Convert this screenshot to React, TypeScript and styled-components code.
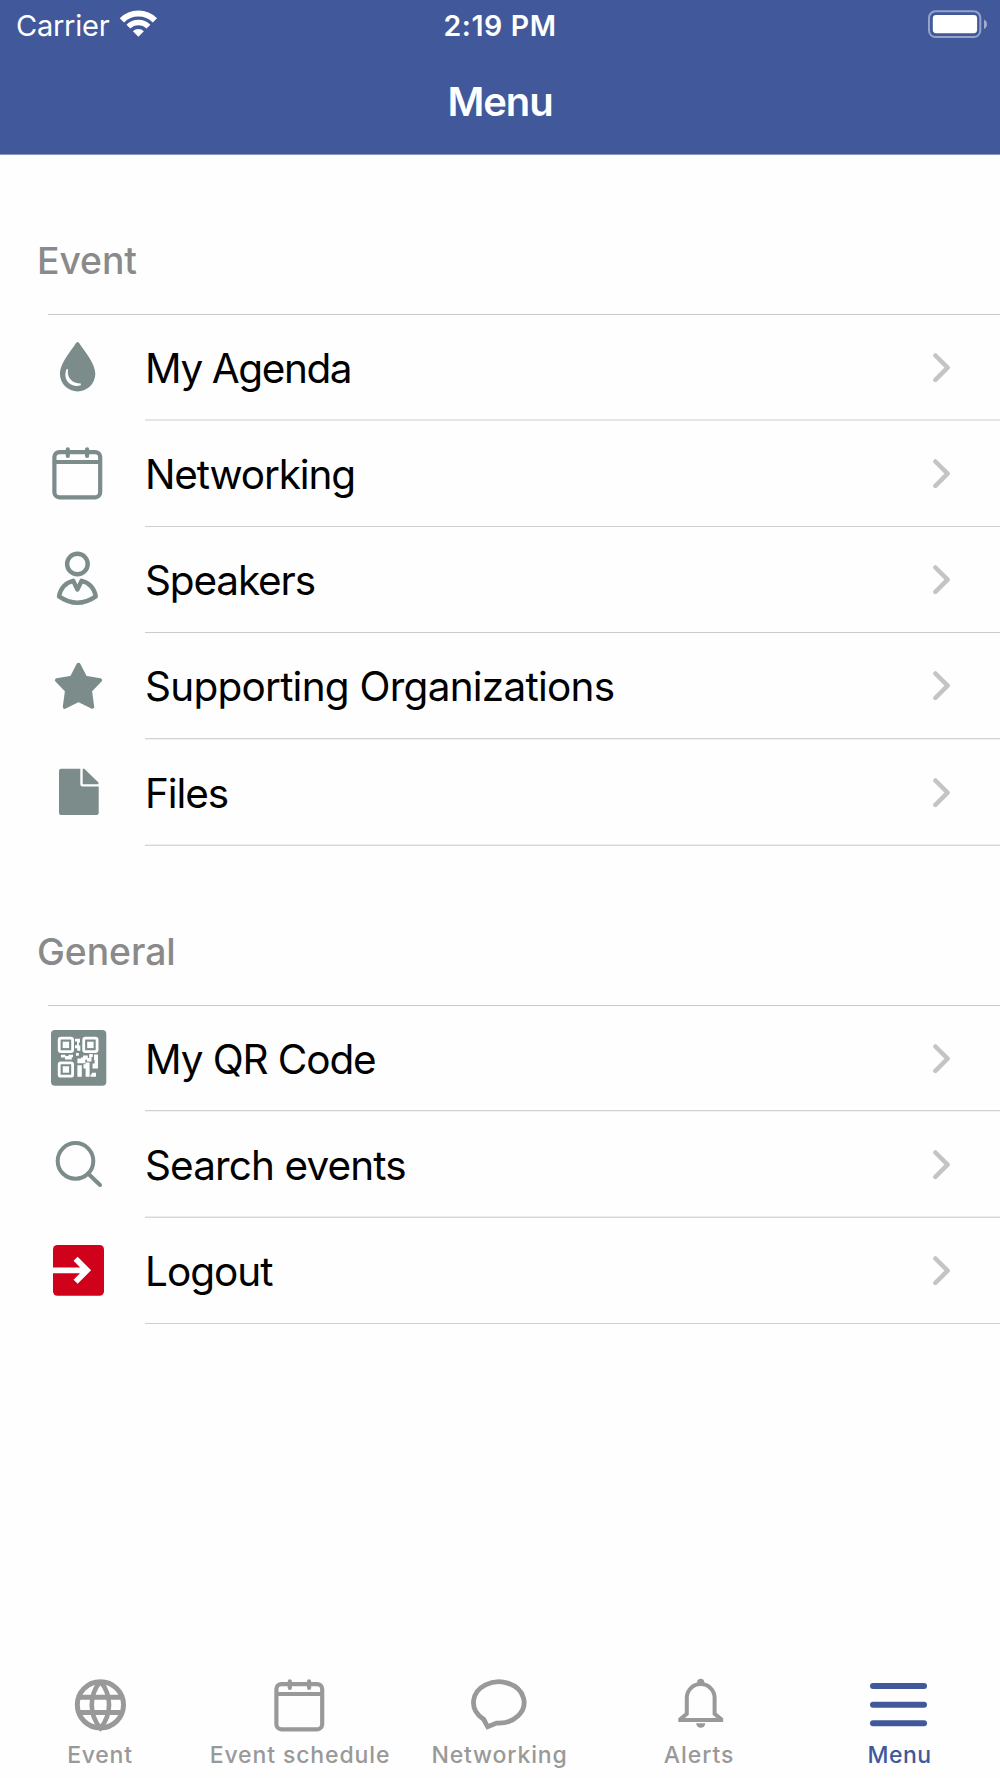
import React from "react";
import styled, { createGlobalStyle } from "styled-components";

const BLUE = "#41589b";
const SLATE = "#7b8c8b";
const TAB_GREY = "#999999";

const GlobalStyle = createGlobalStyle`
  * { box-sizing: border-box; }
  body { margin: 0; background: #fff; }
`;

const Screen = styled.div`
  display: flex;
  flex-direction: column;
  width: 1000px;
  height: 1778px;
  background: #fefefe;
  color: #000;
  font-family: Inter, "Liberation Sans", sans-serif;
  overflow: hidden;
  white-space: nowrap;
`;

const Header = styled.header`
  height: 155px;
  flex: none;
  background: ${BLUE};
  border-bottom: 1px solid #8a96bd;
  color: #fff;
`;

const StatusBar = styled.div`
  display: grid;
  grid-template-columns: 1fr auto 1fr;
  height: 50px;
  padding: 0 12px;
  line-height: 51px;
`;

const Carrier = styled.div`
  display: grid;
  grid-template-columns: 103px 40px;
  padding-left: 4px;
  font-size: 29px;
  letter-spacing: -0.25px;
`;

const Clock = styled.div`
  font-size: 28.5px;
  font-weight: 600;
  letter-spacing: 0.6px;
`;

const Battery = styled.div`
  display: flex;
  justify-content: flex-end;
`;

const Title = styled.h1`
  margin: 0;
  height: 104px;
  line-height: 104px;
  font-size: 40px;
  font-weight: 600;
  letter-spacing: -1.1px;
  text-align: center;
`;

const Main = styled.main`
  flex: 1;
`;

const SectionTitle = styled.h2<{ $space: number }>`
  margin: 0;
  padding: ${(p) => p.$space}px 0 0 37px;
  height: ${(p) => p.$space + 105}px;
  line-height: 104px;
  font-size: 37.3px;
  font-weight: 500;
  letter-spacing: -0.05px;
  color: #8a8a8a;
`;

const Divider = styled.div<{ $inset: number; $upper: string; $lower?: string }>`
  height: ${(p) => (p.$lower ? 2 : 1)}px;
  margin-left: ${(p) => p.$inset}px;
  background: ${(p) => p.$upper};
  border-bottom: ${(p) => (p.$lower ? `1px solid ${p.$lower}` : "none")};
`;

const Row = styled.div<{ $height: number }>`
  display: grid;
  grid-template-columns: 64px 1fr 20px;
  column-gap: 35px;
  height: ${(p) => p.$height}px;
  padding: 0 48px 0 46px;
`;

const RowIcon = styled.div`
  padding-top: 20px;
  height: 84px;
  line-height: 0;
`;

const RowLabel = styled.div<{ $tracking: number }>`
  font-size: 40.5px;
  line-height: 107px;
  letter-spacing: ${(p) => p.$tracking}px;
`;

const RowArrow = styled.div`
  padding-top: 36px;
  line-height: 0;
`;

const TabBar = styled.nav`
  display: grid;
  grid-template-columns: repeat(5, 200px);
  height: 105px;
  flex: none;
`;

const Tab = styled.div<{ $active?: boolean }>`
  display: flex;
  flex-direction: column;
  align-items: center;
  color: ${(p) => (p.$active ? BLUE : TAB_GREY)};
`;

const TabLabel = styled.span<{ $tracking: number; $trail?: number }>`
  margin-top: 2px;
  padding-right: ${(p) => p.$trail ?? 0}px;
  line-height: 33px;
  font-size: 23px;
  font-weight: 500;
  letter-spacing: ${(p) => p.$tracking}px;
`;

const Icon = styled.svg`
  display: block;
  width: 64px;
  height: 64px;
  overflow: visible;
`;

const DropIcon = () => (
  <Icon viewBox="0 0 64 64" fill={SLATE}>
    <path d="M31.6 7C32.6 7 33.2 8 33.8 9C39 17 49.3 28.5 49.3 38.8A17.7 17.6 0 0 1 13.9 38.8C13.9 28.5 24.2 17 29.4 9C30 8 30.6 7 31.6 7Z" />
    <path d="M20.6 34C18 40 19.6 45.5 23.5 48.6C26.8 51.2 31 51.6 34.8 50.2V48.5C30.5 48.3 27.2 47.3 24.8 44.7C22 41.8 21.6 38.4 22 34.3Z" fill="#fff" />
  </Icon>
);

const CalendarIcon = ({ color }: { color: string }) => (
  <Icon viewBox="0 0 64 64" fill="none" stroke={color} strokeWidth="4.2">
    <rect x="8.4" y="11.1" width="45.8" height="45.2" rx="5" />
    <path d="M8.4 21H54.2" />
    <path d="M21.8 8.4V15M41.1 8.4V15" strokeLinecap="round" />
  </Icon>
);

const PersonIcon = () => (
  <Icon viewBox="0 0 64 64" fill="none" stroke={SLATE} strokeWidth="4.4" strokeLinejoin="round">
    <circle cx="31.4" cy="17" r="10.3" />
    <path d="M13 49.4C14.6 41 19.5 35.7 27.2 33.8L31.4 42.5L35.6 33.8C43.3 35.7 48.2 41 49.8 49.4Q31.4 62.2 13 49.4Z" />
  </Icon>
);

const StarIcon = () => (
  <Icon viewBox="0 0 64 64" fill={SLATE} stroke={SLATE} strokeWidth="4" strokeLinejoin="round">
    <path d="M32.5 11.8L39.2 24.6L54.1 27.2L44 37.6L46.2 53.8L32.5 46.9L18.8 53.8L21 37.6L10.9 27.2L25.8 24.6Z" />
  </Icon>
);

const FileIcon = () => (
  <Icon viewBox="0 0 64 64" fill={SLATE}>
    <path d="M15.2 8.7H34.3V24Q34.3 26.5 36.8 26.5H52.7V53Q52.7 55 50.7 55H15Q13 55 13 53V10.9Q13 8.7 15.2 8.7Z" />
    <path d="M36.7 8.7H38.3L52.4 22.6V24.2H36.7Z" />
  </Icon>
);

const QrIcon = () => (
  <Icon viewBox="0 0 64 64">
    <rect x="5" y="4" width="55.3" height="55.7" rx="4" fill={SLATE} />
    <g fill="none" stroke="#fff" strokeWidth="2.8">
      <rect x="13.2" y="12.2" width="13.4" height="13.4" rx="1.8" />
      <rect x="37.7" y="12.2" width="13.4" height="13.4" rx="1.8" />
      <rect x="13.2" y="36.8" width="13.4" height="13.4" rx="1.8" />
    </g>
    <g fill="#fff">
      <rect x="16.7" y="15.7" width="6.4" height="6.4" />
      <rect x="41.2" y="15.7" width="6.4" height="6.4" />
      <rect x="16.7" y="40.3" width="6.4" height="6.4" />
      <path d="M29 12.7H34V16.5H32.9V19.5H34.3V24.8H31.2V22.3H29V19.2H31V15.4H29Z" />
      <path d="M15 28.8H19.4V30H22.5V28.8H27V31.2H25.8V33.5H19V31.4H15Z" />
      <path d="M30 27H32.8V29.7H30ZM35 31.5H37V29.5H41.8V33.7H39.3V37.3H31.4V32.5H35Z" />
      <path d="M43.2 28H46.8V31H45.5V35.6H41V32H43.2ZM48 28.6H52V42.4H46.5V37.4H48.6V34.3H48Z" />
      <path d="M31.4 39.2H35.8V50.7H31.4ZM37.5 38.3H39.5V36.5H43.6V50.7H39.6V42.4H37.5ZM45.8 46.8H50V50.7H44.5V48.5H45.8Z" />
    </g>
  </Icon>
);

const SearchIcon = () => (
  <Icon viewBox="0 0 64 64" fill="none" stroke={SLATE} strokeWidth="4">
    <circle cx="29.5" cy="28.9" r="17.8" />
    <path d="M42.3 41.7L54 53" strokeLinecap="round" />
  </Icon>
);

const LogoutIcon = () => (
  <Icon viewBox="0 0 64 64">
    <rect x="7" y="7" width="51" height="50.7" rx="4.4" fill="#d0021b" />
    <path d="M7 32.3H41M29.6 20.8L41 32.3L29.6 43.8" fill="none" stroke="#fff" strokeWidth="5.8" />
  </Icon>
);

const GlobeIcon = () => (
  <Icon viewBox="0 0 64 64" fill="none" stroke="currentColor" strokeWidth="5">
    <circle cx="32.4" cy="31.8" r="23.1" />
    <path d="M11 24.3H54M11 39.5H54" />
    <path d="M32.4 8.4A36 36 0 0 0 32.4 55.2A36 36 0 0 0 32.4 8.4" strokeWidth="4.6" />
  </Icon>
);

const ChatIcon = () => (
  <Icon viewBox="0 0 64 64" fill="none" stroke="currentColor" strokeWidth="4.8">
    <path d="M15.5 46L19.7 53.8L28.5 50.1A25.3 20.7 0 1 0 14.6 45.4Z" />
  </Icon>
);

const BellIcon = () => (
  <Icon viewBox="0 0 64 64" fill="none" stroke="currentColor" strokeWidth="4">
    <path d="M12.3 47V46.2L18.8 40.7V25A13.9 13.9 0 0 1 46.6 25V40.7L53.2 46.2V47Z" />
    <circle cx="32.7" cy="9.4" r="3.6" fill="currentColor" stroke="none" />
    <path d="M28.2 50.2H37.3A4.5 4.5 0 0 1 28.2 50.2Z" fill="currentColor" stroke="none" />
  </Icon>
);

const BarsIcon = () => (
  <Icon viewBox="0 0 64 64" fill="currentColor">
    <rect x="2" y="10" width="57" height="6" rx="3" />
    <rect x="2" y="28.7" width="57" height="6" rx="3" />
    <rect x="2" y="47.3" width="57" height="6" rx="3" />
  </Icon>
);

const WifiIcon = () => (
  <svg width="40" height="50" viewBox="0 0 40 50" fill="none" stroke="#fff">
    <path d="M2.9 20.4A23.3 23.3 0 0 1 35.9 20.4" strokeWidth="6" />
    <path d="M9.35 26.65A14.2 14.2 0 0 1 29.45 26.65" strokeWidth="5.4" />
    <path d="M19.4 36.8L13.9 31.2A7.9 7.9 0 0 1 24.9 31.2Z" fill="#fff" stroke="none" />
  </svg>
);

const BatteryIcon = () => (
  <svg width="60" height="50" viewBox="0 0 60 50">
    <rect x="1" y="11.3" width="51.3" height="25.7" rx="6.4" fill="none" stroke="#fff" strokeOpacity="0.45" strokeWidth="2" />
    <rect x="4.8" y="15" width="44.3" height="18.2" rx="3.4" fill="#fff" />
    <path d="M56 19.4Q59 21 59 24.3Q59 27.6 56 29.1Z" fill="#fff" fillOpacity="0.5" />
  </svg>
);

const Chevron = () => (
  <svg width="20" height="32" viewBox="0 0 20 32" fill="none" stroke="#c4c4c6" strokeWidth="4.5" strokeLinecap="round" strokeLinejoin="round">
    <path d="M3.4 4.5L15.6 16.7L3.4 28.9" />
  </svg>
);

type Entry = {
  label: string;
  tracking: number;
  icon: React.ReactNode;
  height: number;
  upper: string;
  lower?: string;
};

const eventEntries: Entry[] = [
  { label: "My Agenda", tracking: -1.4, icon: <DropIcon />, height: 104, upper: "#e5e5e6", lower: "#e5e5e6" },
  { label: "Networking", tracking: -1.15, icon: <CalendarIcon color={SLATE} />, height: 105, upper: "#cecdd0" },
  { label: "Speakers", tracking: -1.15, icon: <PersonIcon />, height: 105, upper: "#cccbce" },
  { label: "Supporting Organizations", tracking: -0.76, icon: <StarIcon />, height: 105, upper: "#d3d2d5", lower: "#f2f2f2" },
  { label: "Files", tracking: -1.1, icon: <FileIcon />, height: 104, upper: "#f0f0f0", lower: "#d5d4d7" },
];

const generalEntries: Entry[] = [
  { label: "My QR Code", tracking: -1.1, icon: <QrIcon />, height: 104, upper: "#d2d1d4", lower: "#f2f2f2" },
  { label: "Search events", tracking: -0.9, icon: <SearchIcon />, height: 104, upper: "#ececed", lower: "#d8d7da" },
  { label: "Logout", tracking: -1, icon: <LogoutIcon />, height: 105, upper: "#cecdd0" },
];

const Section = ({ title, space, entries }: { title: string; space: number; entries: Entry[] }) => (
  <section>
    <SectionTitle $space={space}>{title}</SectionTitle>
    <Divider $inset={48} $upper="#c9c8cb" />
    {entries.map((entry) => (
      <React.Fragment key={entry.label}>
        <Row $height={entry.height}>
          <RowIcon>{entry.icon}</RowIcon>
          <RowLabel $tracking={entry.tracking}>{entry.label}</RowLabel>
          <RowArrow>
            <Chevron />
          </RowArrow>
        </Row>
        <Divider $inset={145} $upper={entry.upper} $lower={entry.lower} />
      </React.Fragment>
    ))}
  </section>
);

const tabs = [
  { label: "Event", tracking: 0.75, icon: <GlobeIcon /> },
  { label: "Event schedule", tracking: 0.88, icon: <CalendarIcon color={TAB_GREY} /> },
  { label: "Networking", tracking: 0.85, trail: 1, icon: <ChatIcon /> },
  { label: "Alerts", tracking: 0.95, trail: 2, icon: <BellIcon /> },
  { label: "Menu", tracking: 0.5, trail: 1, icon: <BarsIcon />, active: true },
];

export default function App() {
  return (
    <Screen>
      <GlobalStyle />
      <Header>
        <StatusBar>
          <Carrier>
            <span>Carrier</span>
            <WifiIcon />
          </Carrier>
          <Clock>2:19 PM</Clock>
          <Battery>
            <BatteryIcon />
          </Battery>
        </StatusBar>
        <Title>Menu</Title>
      </Header>
      <Main>
        <Section title="Event" space={54} entries={eventEntries} />
        <Section title="General" space={54} entries={generalEntries} />
      </Main>
      <TabBar>
        {tabs.map((tab) => (
          <Tab key={tab.label} $active={tab.active}>
            {tab.icon}
            <TabLabel $tracking={tab.tracking} $trail={tab.trail}>
              {tab.label}
            </TabLabel>
          </Tab>
        ))}
      </TabBar>
    </Screen>
  );
}
